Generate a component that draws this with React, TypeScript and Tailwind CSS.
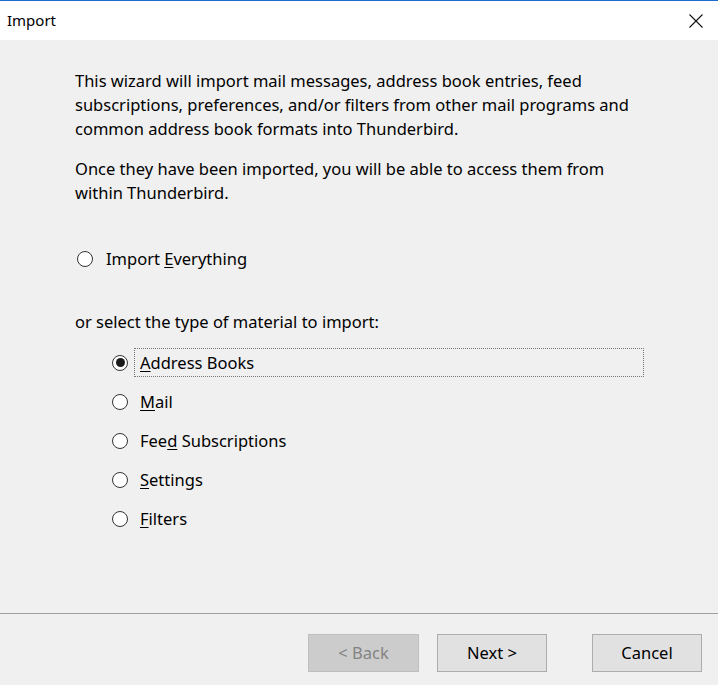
import React, { useState } from 'react';

const font = { fontFamily: '"Noto Sans", "Open Sans", Arial, sans-serif' };

const types = [
  { id: 'addressbooks', pre: '', key: 'A', post: 'ddress Books' },
  { id: 'mail', pre: '', key: 'M', post: 'ail' },
  { id: 'feeds', pre: 'Fee', key: 'd', post: ' Subscriptions' },
  { id: 'settings', pre: '', key: 'S', post: 'ettings' },
  { id: 'filters', pre: '', key: 'F', post: 'ilters' },
];

const Radio = ({ checked }: { checked: boolean }) => (
  <span className="flex h-[16px] w-[16px] shrink-0 items-center justify-center rounded-full border border-[#333333] bg-white">
    {checked && <span className="h-[9px] w-[9px] rounded-full bg-[#1a1a1a]"></span>}
  </span>
);

export default function App() {
  const [selected, setSelected] = useState('addressbooks');

  return (
    <div className="flex h-[685px] w-[718px] flex-col overflow-hidden bg-[#f0f0f0] text-black" style={font}>
      <div className="flex h-[40px] shrink-0 items-center justify-between border-t border-[#1c6ccf] bg-white pl-[7px] pr-[14px]">
        <span className="text-[15px]">Import</span>
        <svg width="16" height="16" viewBox="0 0 16 16" className="text-[#111]">
          <path d="M1.5 1.5 L14.5 14.5 M14.5 1.5 L1.5 14.5" stroke="currentColor" strokeWidth="1.1" fill="none" />
        </svg>
      </div>

      <div className="flex flex-1 flex-col pl-[75px] pt-[29px] text-[16.5px] leading-[24px]">
        <p className="w-[580px]">
          This wizard will import mail messages, address book entries, feed subscriptions, preferences, and/or filters from other mail programs and common address book formats into Thunderbird.
        </p>
        <p className="mt-[16px] w-[580px]">
          Once they have been imported, you will be able to access them from within Thunderbird.
        </p>

        <label className="mt-[42px] flex h-[24px] items-center gap-[13px] pl-[2px]" onClick={() => setSelected('everything')}>
          <Radio checked={selected === 'everything'} />
          <span>
            Import <span className="underline underline-offset-2">E</span>verything
          </span>
        </label>

        <p className="mt-[39px]">or select the type of material to import:</p>

        <div className="mt-[9px] flex flex-col pl-[37px]">
          {types.map((t) => (
            <label key={t.id} className="flex h-[39px] items-center gap-[6px]" onClick={() => setSelected(t.id)}>
              <Radio checked={selected === t.id} />
              <span
                className={`flex h-[29px] items-center px-[5px] ${
                  selected === t.id ? 'w-[510px] border border-dotted border-[#777777]' : 'border border-transparent'
                }`}
              >
                <span className="whitespace-pre">
                  {t.pre}
                  <span className="underline underline-offset-2">{t.key}</span>
                  {t.post}
                </span>
              </span>
            </label>
          ))}
        </div>
      </div>

      <div className="h-[1px] shrink-0 bg-[#a0a0a0]"></div>

      <div className="flex shrink-0 items-center justify-end pb-[13px] pr-[16px] pt-[20px] text-[16.5px]">
        <button className="h-[38px] w-[111px] border border-[#bfbfbf] bg-[#cccccc] text-[#838383]" disabled>
          &lt; Back
        </button>
        <button className="ml-[18px] h-[38px] w-[110px] border border-[#adadad] bg-[#e1e1e1]">Next &gt;</button>
        <button className="ml-[45px] h-[38px] w-[110px] border border-[#adadad] bg-[#e1e1e1]">Cancel</button>
      </div>
    </div>
  );
}
